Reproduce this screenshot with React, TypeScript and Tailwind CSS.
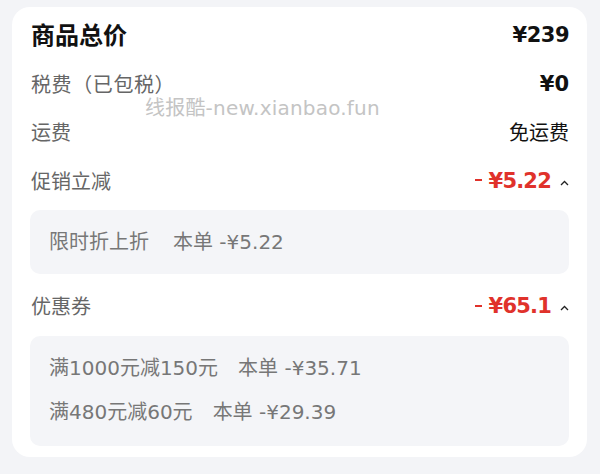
import React from "react";

const FONT = "font-['DejaVu_Sans','Noto_Sans_CJK_SC',sans-serif]";

function Caret() {
  return (
    <svg width="9" height="6" viewBox="0 0 9 6" className="ml-[9px] mt-[2px]">
      <polyline points="1,5 4.5,1.5 8,5" fill="none" stroke="#222" strokeWidth="1.3" />
    </svg>
  );
}

function Discount({ amount }: { amount: string }) {
  return (
    <div className="flex items-center text-[#e0322b]">
      <span className="w-[7px] h-[2px] bg-[#e0322b] mr-[7px] -mt-[3px]" />
      <span className="text-[21px] font-bold tracking-[-0.8px]">¥{amount}</span>
      <Caret />
    </div>
  );
}

export default function App() {
  return (
    <div className={`w-[600px] h-[474px] bg-[#f3f4f7] pt-[7px] px-[12px] ${FONT}`}>
      <div className="relative w-[575px] h-[450px] bg-white rounded-[18px] px-[18px] pt-[5px]">
        <div className="h-[48px] flex items-center justify-between pl-[1px]">
          <span className="text-[24px] font-bold text-[#111]">商品总价</span>
          <span className="text-[21px] font-bold text-[#111] tracking-[-0.5px]">¥239</span>
        </div>
        <div className="h-[49px] flex items-center justify-between pl-[1px]">
          <span className="text-[20px] text-[#666] tracking-[0.6px]">税费（已包税）</span>
          <span className="text-[21px] font-bold text-[#111]">¥0</span>
        </div>
        <div className="h-[48px] flex items-center justify-between pl-[1px]">
          <span className="text-[20px] text-[#666]">运费</span>
          <span className="text-[20px] text-[#111]">免运费</span>
        </div>
        <div className="h-[49px] flex items-center justify-between pl-[1px]">
          <span className="text-[20px] text-[#666]">促销立减</span>
          <Discount amount="5.22" />
        </div>
        <div className="mt-[4px] h-[64px] rounded-[10px] bg-[#f4f5f8] flex items-center px-[19px] text-[20px] text-[#777]">
          <span>限时折上折</span>
          <span className="ml-[24px]">本单 -¥5.22</span>
        </div>
        <div className="mt-[9px] h-[48px] flex items-center justify-between pl-[1px]">
          <span className="text-[20px] text-[#666]">优惠券</span>
          <Discount amount="65.1" />
        </div>
        <div className="mt-[5px] rounded-[10px] bg-[#f4f5f8] px-[19px] pt-[10px] pb-[12px] text-[20px] text-[#777]">
          <div className="h-[44px] flex items-center">
            <span>满1000元减150元</span>
            <span className="ml-[20px]">本单 -¥35.71</span>
          </div>
          <div className="h-[44px] flex items-center">
            <span>满480元减60元</span>
            <span className="ml-[20px]">本单 -¥29.39</span>
          </div>
        </div>
        <div className="absolute left-[133px] top-[86px] text-[20px] text-[#c4c4c4] tracking-[0.2px]">
          线报酷-new.xianbao.fun
        </div>
      </div>
    </div>
  );
}
